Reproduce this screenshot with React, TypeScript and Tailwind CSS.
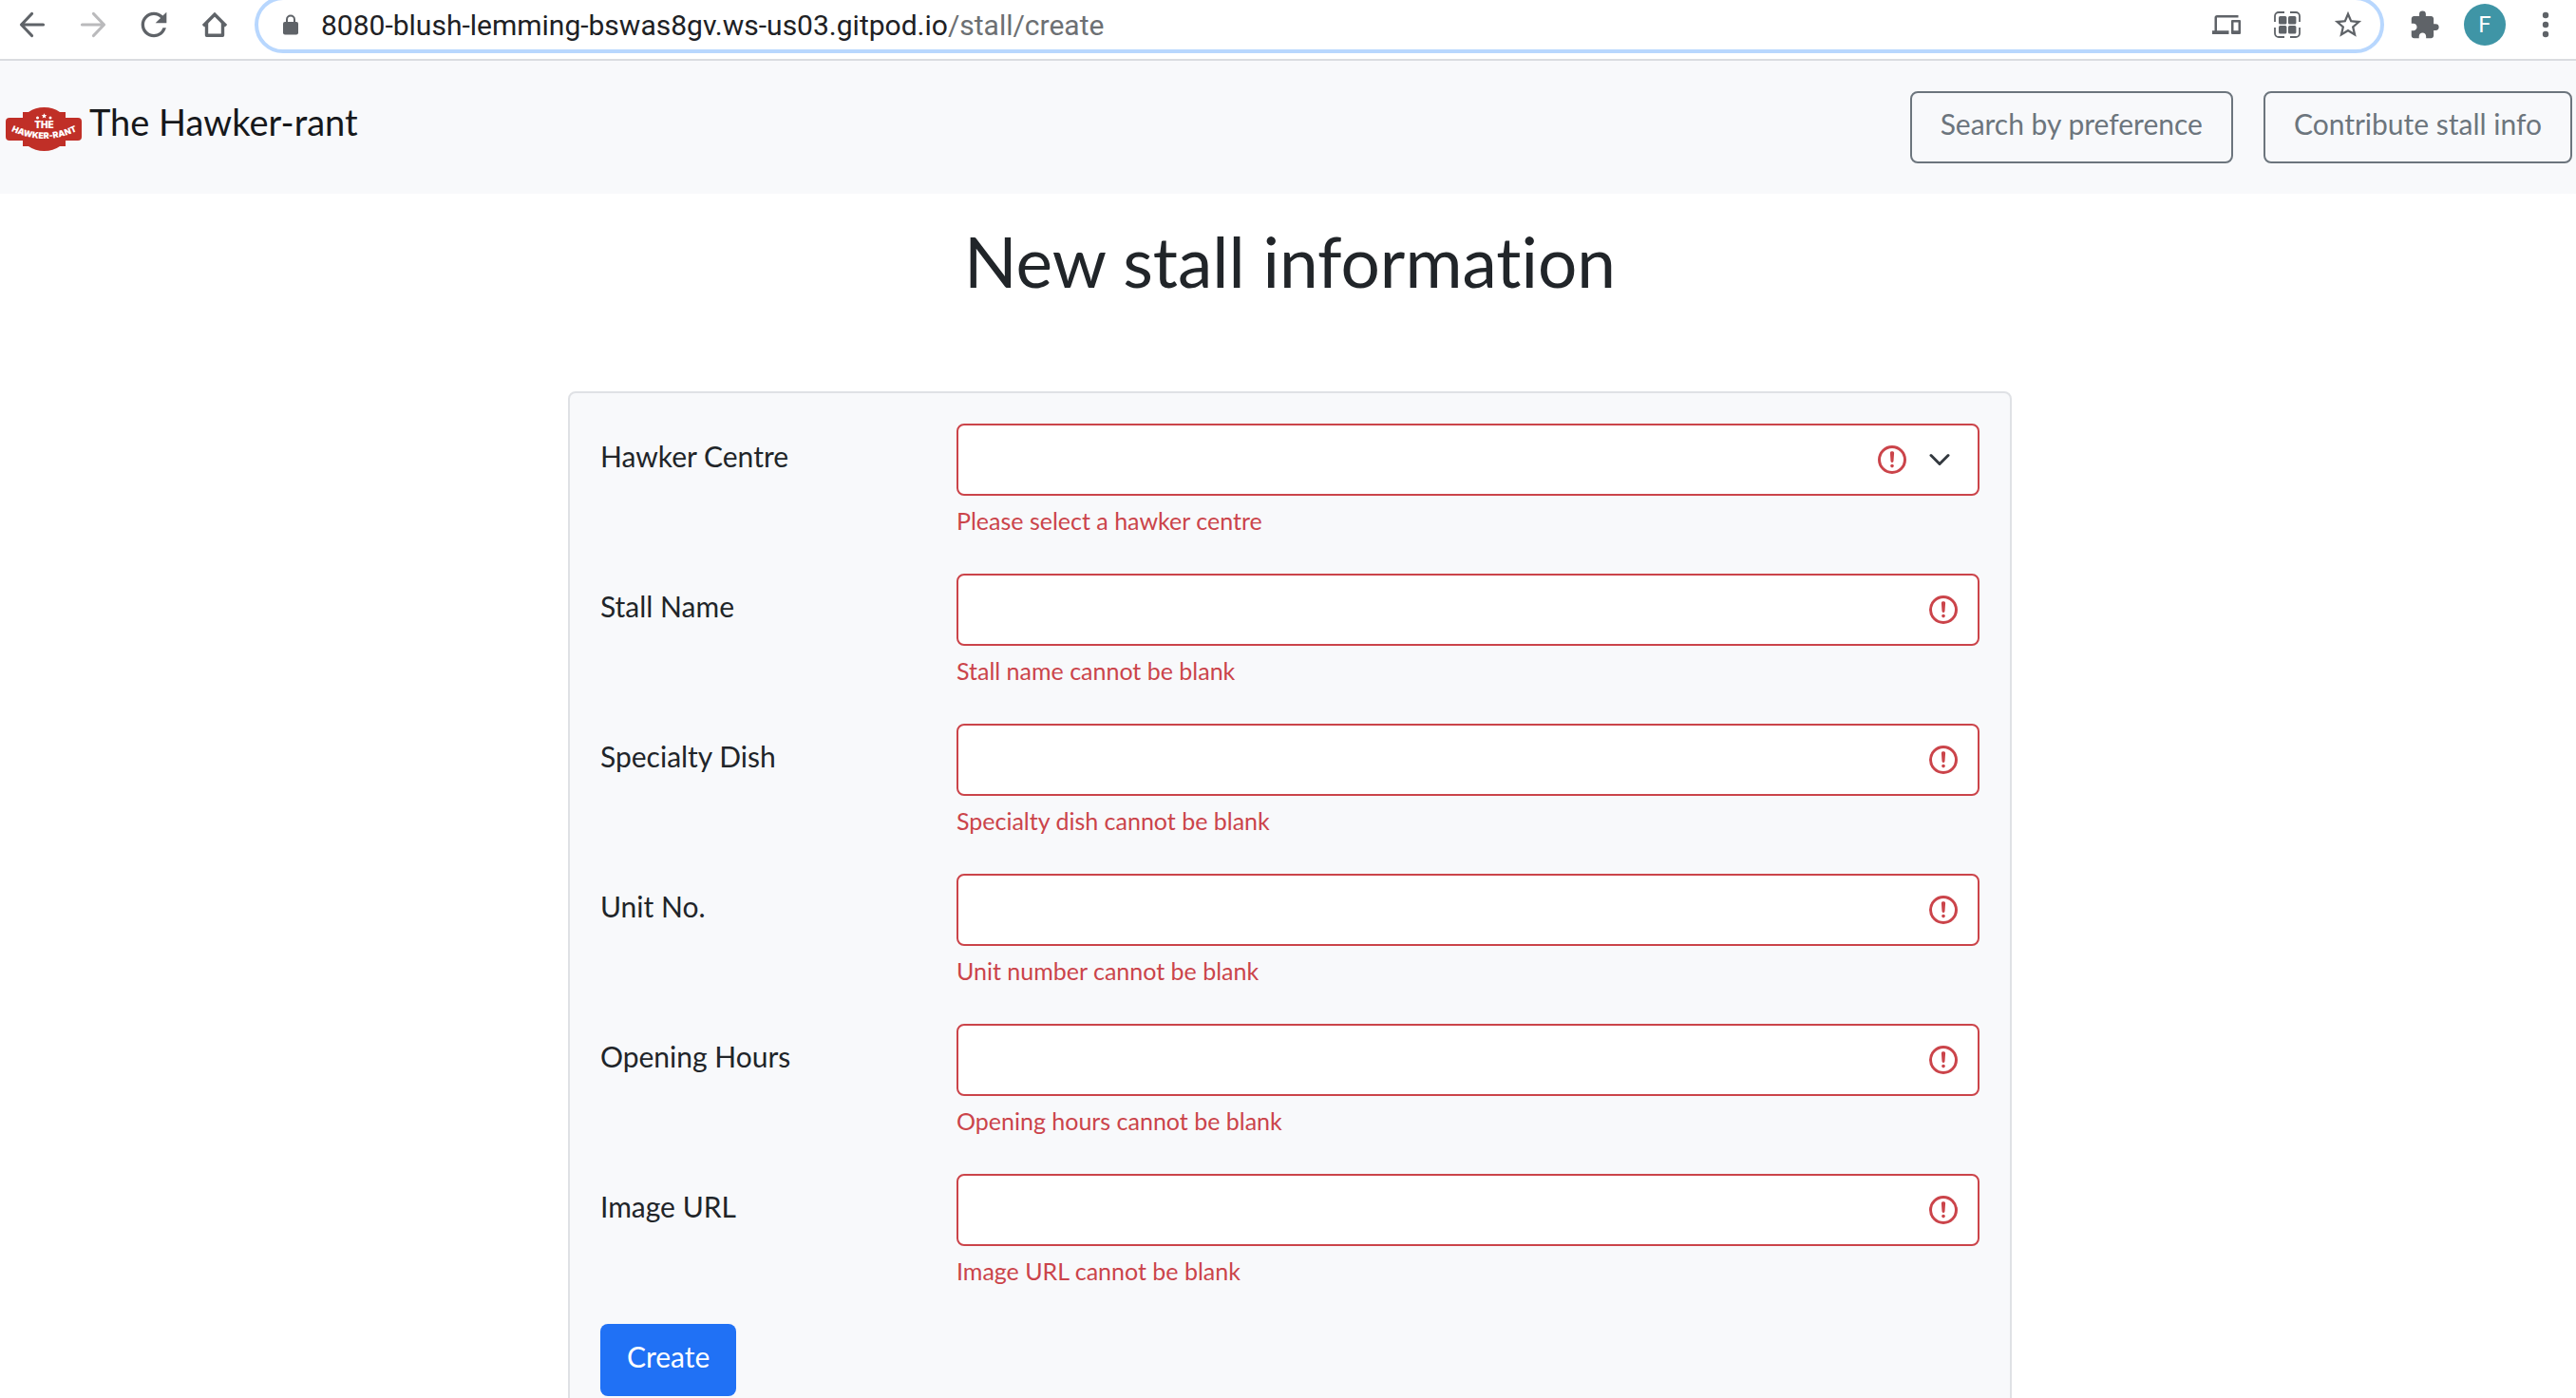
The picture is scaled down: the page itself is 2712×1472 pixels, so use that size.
import type { ReactNode } from "react";
import { MdDevices, MdExtension, MdRefresh, MdStarBorder } from "react-icons/md";

type Field = { id: string; label: string; error: string; kind: "text" | "select" };

const fields: Field[] = [
  { id: "hawker-centre", label: "Hawker Centre", error: "Please select a hawker centre", kind: "select" },
  { id: "stall-name", label: "Stall Name", error: "Stall name cannot be blank", kind: "text" },
  { id: "specialty-dish", label: "Specialty Dish", error: "Specialty dish cannot be blank", kind: "text" },
  { id: "unit-no", label: "Unit No.", error: "Unit number cannot be blank", kind: "text" },
  { id: "opening-hours", label: "Opening Hours", error: "Opening hours cannot be blank", kind: "text" },
  { id: "image-url", label: "Image URL", error: "Image URL cannot be blank", kind: "text" },
];

function IconButton({ label, children }: { label: string; children: ReactNode }) {
  return (
    <button type="button" aria-label={label} className="flex size-10 shrink-0 items-center justify-center">
      {children}
    </button>
  );
}

function ArrowIcon() {
  return (
    <svg viewBox="0 0 40 40" className="size-10" fill="none" stroke="currentColor" strokeWidth="3.200" strokeLinecap="round" strokeLinejoin="round">
      <path d="M31.500 20H9M19.500 8.500L8.500 20L19.500 31.500" />
    </svg>
  );
}

function HomeIcon() {
  return (
    <svg viewBox="0 0 40 40" className="size-10" fill="none" stroke="currentColor" strokeWidth="3.400">
      <path d="M8 21.200L20 9.200L32 21.200" />
      <path strokeLinejoin="round" d="M11.500 18V31.300H28.500V18" />
    </svg>
  );
}

function LockIcon() {
  return (
    <svg viewBox="0 0 16 22" className="h-[22px] w-4 shrink-0">
      <rect y="8" width="16" height="13.500" rx="2" fill="currentColor" />
      <path d="M4 9V5.500a4 4 0 0 1 8 0V9" fill="none" stroke="currentColor" strokeWidth="2" />
    </svg>
  );
}

function GridIcon() {
  return (
    <svg viewBox="0 0 30 30" className="size-[30px]">
      <path
        d="M2 12V6a4 4 0 0 1 4-4h6M18 2h6a4 4 0 0 1 4 4v6M28 18v6a4 4 0 0 1-4 4h-6M12 28H6a4 4 0 0 1-4-4v-6"
        fill="none"
        stroke="currentColor"
        strokeWidth="1.800"
      />
      <g fill="currentColor">
        <rect x="6" y="6" width="8.400" height="8.400" rx="1.500" />
        <rect x="16" y="6" width="8.400" height="8.400" rx="1.500" />
        <rect x="6" y="16" width="8.400" height="8.400" rx="1.500" />
        <rect x="16" y="16" width="8.400" height="8.400" rx="1.500" />
      </g>
    </svg>
  );
}

function BrandLogo() {
  return (
    <svg viewBox="0 0 80 46" className="mt-1 h-[46px] w-20" role="img" aria-label="The Hawker-rant logo">
      <g fill="#c02f27">
        <rect x="0" y="11" width="80" height="24" rx="4" />
        <path d="M18 5H24Q31 0 40.500 0T57 5H63V41H57Q50 46 40.500 46T24 41H18Z" />
      </g>
      <g fill="#fff">
        <path d="M40.500 6.200l.8 1.900 2 .1-1.500 1.300.5 2-1.800-1.100-1.800 1.100.5-2-1.500-1.300 2-.1z" />
        <circle cx="33.500" cy="11" r="1.500" />
        <circle cx="47" cy="11" r="1.500" />
        <text x="40.500" y="22" textAnchor="middle" className="font-[Inter] text-[10px] font-black">THE</text>
        <path id="logo-arc" d="M4 24Q40.500 42 77 24" fill="none" />
        <text textAnchor="middle" className="font-[Inter] text-[9px] font-black">
          <textPath href="#logo-arc" startOffset="50%">HAWKER-RANT</textPath>
        </text>
      </g>
    </svg>
  );
}

function InvalidIcon() {
  return (
    <svg viewBox="0 0 12 12" className="size-9" fill="none" stroke="#cb444a">
      <circle cx="6" cy="6" r="4.500" />
      <path strokeLinejoin="round" d="M5.800 3.600h.4L6 6.500z" />
      <circle cx="6" cy="8.200" r=".6" fill="#cb444a" stroke="none" />
    </svg>
  );
}

function ChevronIcon() {
  return (
    <svg viewBox="0 0 16 16" className="size-6" fill="none" stroke="#343a40" strokeWidth="2" strokeLinecap="round" strokeLinejoin="round">
      <path d="M2 5l6 6 6-6" />
    </svg>
  );
}

function BrowserBar() {
  return (
    <header className="flex h-16 shrink-0 items-start overflow-hidden border-b-2 border-[#dadce0] bg-white pr-3 text-[#5f6368]">
      <div className="flex gap-6 pt-[6px] pl-[14px]">
        <IconButton label="Back"><ArrowIcon /></IconButton>
        <button type="button" aria-label="Forward" disabled className="flex size-10 rotate-180 items-center justify-center text-[#bababc]">
          <ArrowIcon />
        </button>
        <IconButton label="Reload"><MdRefresh className="size-10" /></IconButton>
        <IconButton label="Home"><HomeIcon /></IconButton>
      </div>
      <div className="-mt-1 ml-[22px] flex h-[60px] flex-1 items-center rounded-full border-4 border-[#b8d7fe] px-[26px] pr-[14px]">
        <LockIcon />
        <div className="ml-6 flex-1 font-[Roboto] text-[30px] whitespace-nowrap text-[#202124]">
          8080-blush-lemming-bswas8gv.ws-us03.gitpod.io<span className="text-[#6d7073]">/stall/create</span>
        </div>
        <div className="flex gap-6">
          <IconButton label="Send to your devices"><MdDevices className="size-[30px]" /></IconButton>
          <IconButton label="QR code"><GridIcon /></IconButton>
          <IconButton label="Bookmark this page"><MdStarBorder className="size-[34px]" /></IconButton>
        </div>
      </div>
      <div className="ml-[22px] flex items-center gap-[22px] pt-1">
        <IconButton label="Extensions"><MdExtension className="size-[33px]" /></IconButton>
        <button type="button" aria-label="Profile" className="flex size-11 items-center justify-center rounded-full bg-[#3f95a6] font-[Roboto] text-2xl text-white">
          F
        </button>
        <IconButton label="Menu">
          <svg viewBox="0 0 40 40" className="size-10" fill="currentColor">
            <circle cx="20" cy="10" r="3.200" />
            <circle cx="20" cy="20" r="3.200" />
            <circle cx="20" cy="30" r="3.200" />
          </svg>
        </IconButton>
      </div>
    </header>
  );
}

function NavBar() {
  return (
    <nav className="flex items-center justify-between bg-[#f8f9fb] px-1 py-8">
      <a href="#home" className="flex items-center gap-2 pl-0.5 text-[38px] leading-none text-[#16181b]">
        <BrandLogo />
        <span className="pb-3">The Hawker-rant</span>
      </a>
      <div className="flex gap-8">
        {["Search by preference", "Contribute stall info"].map((text) => (
          <a key={text} href="#nav" className="flex h-19 items-center rounded-lg border-2 border-[#6c757d] px-[30px] pb-2 text-[30px] text-[#6c757d]">
            {text}
          </a>
        ))}
      </div>
    </nav>
  );
}

function FormRow({ field }: { field: Field }) {
  const control = "block h-19 w-full appearance-none rounded-lg border-2 border-[#cb444a] bg-white px-6 text-[30px] text-[#212529]";
  return (
    <div className="-mx-6 flex">
      <label htmlFor={field.id} className="w-1/4 px-6 pt-2.5 text-[30px] leading-12">
        {field.label}
      </label>
      <div className="w-3/4 px-6">
        <div className="relative">
          {field.kind === "select" ? (
            <select id={field.id} aria-invalid="true" aria-describedby={`${field.id}-error`} className={control} defaultValue="">
              <option value="" />
            </select>
          ) : (
            <input id={field.id} type="text" aria-invalid="true" aria-describedby={`${field.id}-error`} className={control} />
          )}
          <div className="pointer-events-none absolute inset-y-0 right-5 flex items-center">
            <InvalidIcon />
            {field.kind === "select" && (
              <span className="mr-2.5 ml-5">
                <ChevronIcon />
              </span>
            )}
          </div>
        </div>
        <p id={`${field.id}-error`} className="mt-2 text-[25px] leading-9 text-[#cb444a]">
          {field.error}
        </p>
      </div>
    </div>
  );
}

export default function App() {
  return (
    <div className="flex h-screen flex-col overflow-hidden bg-white font-[Lato,sans-serif] text-[#212529] [font-variant-ligatures:none]">
      <BrowserBar />
      <div className="min-h-0 flex-1 overflow-y-auto [scrollbar-width:none]">
        <NavBar />
        <main className="flex flex-col items-center px-6 pt-7 pb-24 pl-7">
          <h1 className="text-center text-[73px] leading-[86px]">New stall information</h1>
          <form noValidate className="mt-[94px] flex w-full max-w-[1520px] flex-col gap-[38px] rounded-lg border-2 border-[#dfe1e5] bg-[#f8f9fb] p-8">
            {fields.map((field) => (
              <FormRow key={field.id} field={field} />
            ))}
            <button type="button" className="flex h-19 items-center self-start rounded-lg bg-[#2071f5] px-7 pb-2 text-[30px] text-white">
              Create
            </button>
          </form>
        </main>
      </div>
    </div>
  );
}
